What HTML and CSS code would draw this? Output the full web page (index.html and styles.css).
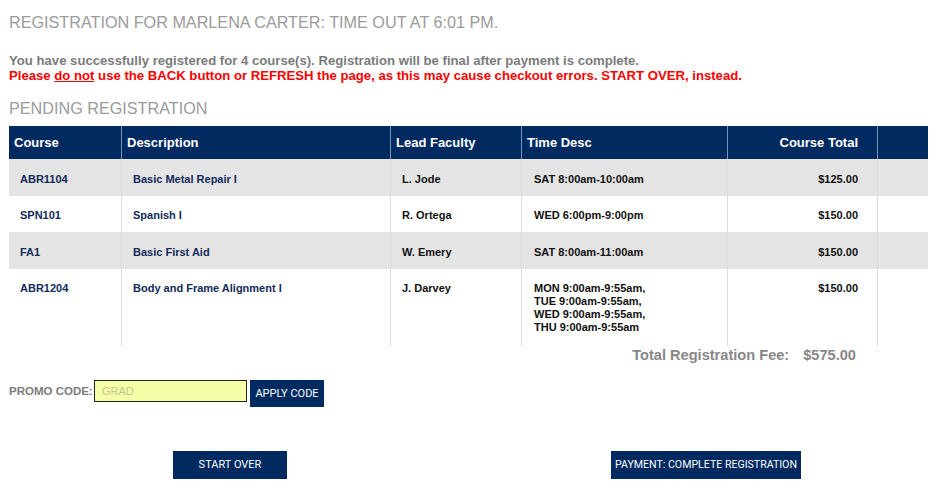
FILE: index.html
```html
<!DOCTYPE html>
<html>
<head>
<meta charset="utf-8">
<link rel="stylesheet" href="styles.css">
</head>
<body>
<div class="page">
  <h1 class="title">REGISTRATION FOR MARLENA CARTER: TIME OUT AT 6:01 PM.</h1>
  <div class="msg">
    <p class="ok">You have successfully registered for 4 course(s). Registration will be final after payment is complete.</p>
    <p class="warn">Please <u>do not</u> use the BACK button or REFRESH the page, as this may cause checkout errors. START OVER, instead.</p>
  </div>
  <h2 class="title sub">PENDING REGISTRATION</h2>
  <table class="reg">
    <colgroup>
      <col class="c1"><col class="c2"><col class="c3"><col class="c4"><col class="c5"><col class="c6">
    </colgroup>
    <thead>
      <tr>
        <th>Course</th>
        <th>Description</th>
        <th>Lead Faculty</th>
        <th>Time Desc</th>
        <th class="num">Course Total</th>
        <th></th>
      </tr>
    </thead>
    <tbody>
      <tr class="alt">
        <td class="code">ABR1104</td>
        <td class="desc">Basic Metal Repair I</td>
        <td class="fac">L. Jode</td>
        <td class="time">SAT 8:00am-10:00am</td>
        <td class="num">$125.00</td>
        <td></td>
      </tr>
      <tr>
        <td class="code">SPN101</td>
        <td class="desc">Spanish I</td>
        <td class="fac">R. Ortega</td>
        <td class="time">WED 6:00pm-9:00pm</td>
        <td class="num">$150.00</td>
        <td></td>
      </tr>
      <tr class="alt">
        <td class="code">FA1</td>
        <td class="desc">Basic First Aid</td>
        <td class="fac">W. Emery</td>
        <td class="time">SAT 8:00am-11:00am</td>
        <td class="num">$150.00</td>
        <td></td>
      </tr>
      <tr class="last">
        <td class="code">ABR1204</td>
        <td class="desc">Body and Frame Alignment I</td>
        <td class="fac">J. Darvey</td>
        <td class="time">MON 9:00am-9:55am,<br>TUE 9:00am-9:55am,<br>WED 9:00am-9:55am,<br>THU 9:00am-9:55am</td>
        <td class="num">$150.00</td>
        <td></td>
      </tr>
    </tbody>
  </table>
  <div class="total"><span>Total Registration Fee:</span><span>$575.00</span></div>
  <div class="promo">
    <label class="promo-label" for="promo">PROMO CODE:</label>
    <input id="promo" class="promo-input" type="text" placeholder="GRAD">
    <button class="btn apply">APPLY CODE</button>
  </div>
  <div class="actions">
    <button class="btn big start">START OVER</button>
    <button class="btn big pay">PAYMENT: COMPLETE REGISTRATION</button>
  </div>
</div>
</body>
</html>
```

FILE: styles.css
```css
* { box-sizing: border-box; }
html, body { margin: 0; padding: 0; background: #fff; }
body { font-family: "Liberation Sans", Arial, sans-serif; }
.page { padding: 12px 8px 0 9px; width: 936px; }

.title {
  margin: 0;
  font-size: 16.2px;
  line-height: 20px;
  font-weight: normal;
  color: #9b9b9b;
}
.sub { margin-top: 15px; }

.msg { margin-top: 21px; }
.msg p { margin: 0; font-size: 13.15px; line-height: 15px; font-weight: bold; }
.ok { color: #7b7b7b; }
.warn { color: #ff0000; }

.reg {
  margin-top: 8px;
  width: 919px;
  table-layout: fixed;
  border-collapse: separate;
  border-spacing: 0;
}
.c1 { width: 113px; }
.c2 { width: 269px; }
.c3 { width: 131px; }
.c4 { width: 206px; }
.c5 { width: 150px; }
.c6 { width: 50px; }

.reg th {
  background: #002a60;
  color: #fff;
  font-size: 13px;
  font-weight: bold;
  text-align: left;
  height: 33px;
  padding: 0 0 0 5px;
  border-right: 1px solid #7f93b5;
  vertical-align: middle;
}
.reg th:last-child, .reg td:last-child { border-right: none; }
.reg th.num { text-align: right; padding: 0 19px 0 0; }

.reg td {
  font-size: 11px;
  line-height: 13px;
  font-weight: bold;
  color: #111;
  padding: 13.5px 0 10px 11px;
  vertical-align: top;
  border-right: 1px solid #dcdcdc;
}
.reg tr.alt td { background: #e4e4e4; }
.reg tr.last td { padding-top: 13px; padding-bottom: 12px; }
.reg td.code, .reg td.desc { color: #112a5c; }
.reg td.desc { padding-left: 11px; }
.reg td.time { padding-left: 12px; }
.reg td.num { text-align: right; padding-left: 0; padding-right: 19px; }

.total {
  display: flex;
  justify-content: flex-end;
  gap: 14px;
  padding-right: 72px;
  font-size: 14.6px;
  line-height: 18px;
  font-weight: bold;
  color: #878787;
}

.promo {
  display: flex;
  align-items: flex-start;
  margin-top: 16px;
}
.promo-label {
  font-size: 11.5px;
  font-weight: bold;
  color: #7b7b7b;
  line-height: 14px;
  margin-top: 4px;
  width: 85px;
}
.promo-input {
  width: 153px;
  height: 22px;
  border: 1px solid #222;
  background: #f6fda7;
  font-family: "Liberation Sans", Arial, sans-serif;
  font-size: 11px;
  padding: 0 0 0 7px;
  margin: 0;
  outline: none;
}
.promo-input::placeholder { color: #c2c58c; }

.btn {
  background: #002a60;
  color: #fff;
  border: none;
  font-family: Roboto, "Liberation Sans", sans-serif;
  font-size: 11px;
  padding: 0;
  margin: 0;
  cursor: pointer;
}
.apply { width: 74px; height: 27px; margin-left: 3px; }

.actions {
  display: flex;
  gap: 324px;
  padding-left: 164px;
  margin-top: 44px;
}
.big { height: 28px; }
.start { width: 114px; }
.pay { width: 190px; font-size: 10.6px; }
```
